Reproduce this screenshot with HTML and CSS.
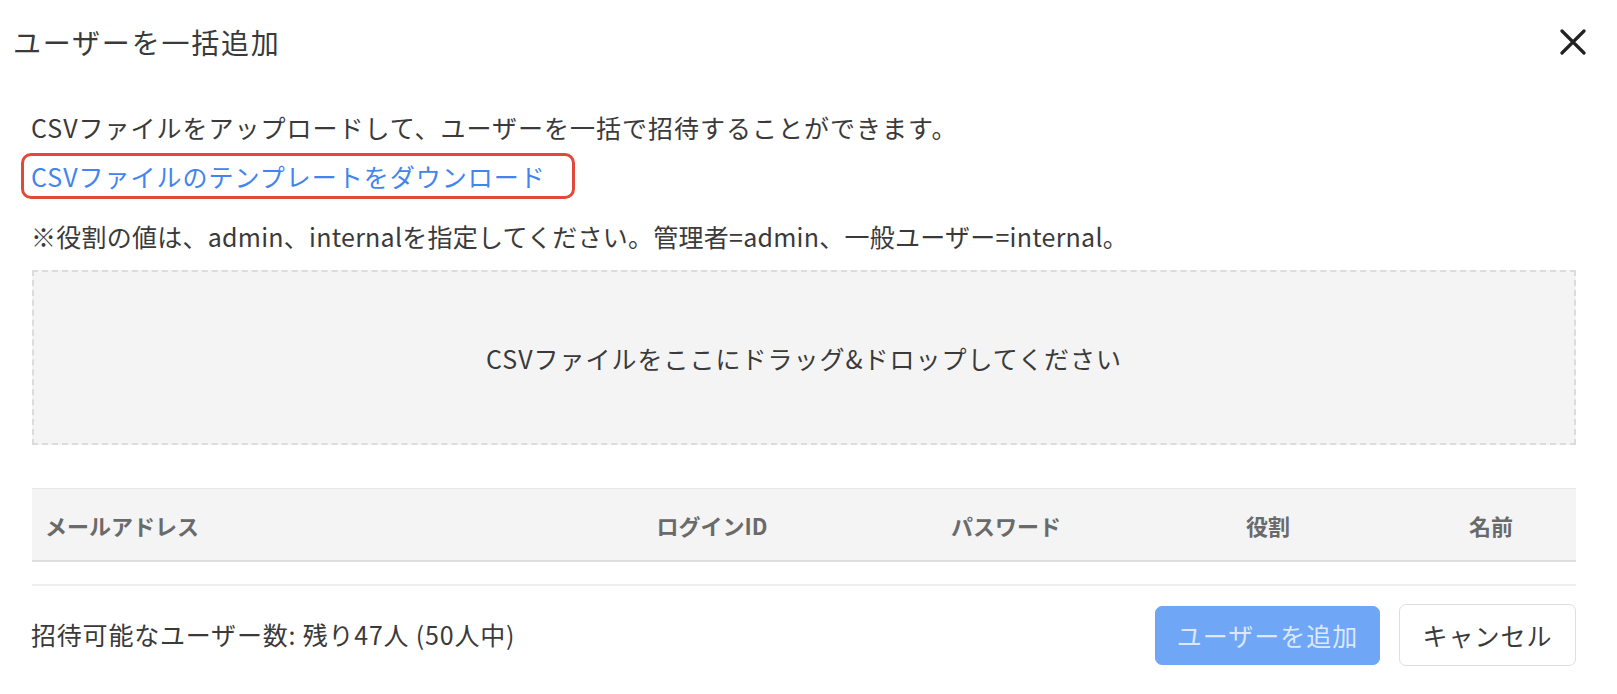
FILE: index.html
```html
<!DOCTYPE html>
<html lang="ja">
<head>
<meta charset="utf-8">
<title>ユーザーを一括追加</title>
<link rel="stylesheet" href="styles.css">
</head>
<body>
<div class="modal">
  <div class="modal-header">
    <h1 class="modal-title">ユーザーを一括追加</h1>
    <button class="close-btn" aria-label="閉じる">
      <svg width="26" height="26" viewBox="0 0 26 26"><path d="M2 2 L24 24 M24 2 L2 24" stroke="#222" stroke-width="3.2" stroke-linecap="round" fill="none"/></svg>
    </button>
  </div>
  <div class="modal-body">
    <p class="desc">CSVファイルをアップロードして、ユーザーを一括で招待することができます。</p>
    <div class="link-row"><a class="template-link" href="#">CSVファイルのテンプレートをダウンロード</a></div>
    <p class="note">※役割の値は、admin、internalを指定してください。管理者=admin、一般ユーザー=internal。</p>
    <div class="dropzone">CSVファイルをここにドラッグ&amp;ドロップしてください</div>
    <div class="table">
      <div class="thead">
        <div class="th th-left">メールアドレス</div>
        <div class="th">ログインID</div>
        <div class="th">パスワード</div>
        <div class="th">役割</div>
        <div class="th">名前</div>
      </div>
      <div class="tbody"></div>
    </div>
    <div class="footer">
      <span class="count">招待可能なユーザー数: 残り47人 (50人中)</span>
      <div class="actions">
        <button class="btn btn-primary" disabled>ユーザーを追加</button>
        <button class="btn btn-default">キャンセル</button>
      </div>
    </div>
  </div>
</div>
</body>
</html>
```

FILE: styles.css
```css
* { box-sizing: border-box; }
html, body { margin: 0; padding: 0; background: #fff; }
body {
  font-family: "Noto Sans CJK JP", "Noto Sans", sans-serif;
  color: #3a3a3a;
  font-size: 25px;
  letter-spacing: 1px;
}
.modal { width: 1617px; height: 694px; }
.modal-header {
  height: 84px;
  display: flex;
  align-items: center;
  justify-content: space-between;
  padding: 0 31px 0 13px;
}
.modal-title {
  margin: 0;
  font-size: 28px;
  font-weight: 400;
  letter-spacing: 1.8px;
  color: #3a3a3a;
  line-height: 36px;
}
.close-btn {
  border: 0;
  background: transparent;
  padding: 0;
  width: 26px;
  height: 26px;
  display: flex;
  cursor: pointer;
}
.modal-body { padding: 0 41px 0 31px; }
.desc {
  margin: 25px 0 0;
  line-height: 36px;
}
.link-row { margin-top: 8px; height: 46px; }
.template-link {
  display: inline-block;
  margin-left: -10px;
  padding: 0 26px 0 7px;
  height: 46px;
  line-height: 40px;
  border: 3px solid #e2493b;
  border-radius: 10px;
  color: #4384ee;
  text-decoration: none;
}
.note {
  margin: 19px 0 0;
  line-height: 36px;
  letter-spacing: 0.25px;
}
.dropzone {
  margin-top: 16px;
  margin-left: 1px;
  height: 175px;
  background: #f4f4f4;
  border: 2px dashed #dcdcdc;
  display: flex;
  align-items: center;
  justify-content: center;
  color: #3a3a3a;
}
.table { margin-top: 43px; margin-left: 1px; }
.thead {
  display: grid;
  grid-template-columns: 510px 340px 248px 276px 170px;
  height: 74px;
  background: #f4f4f4;
  border-top: 1px solid #e8e8e8;
  border-bottom: 2px solid #dedede;
  align-items: center;
}
.th {
  font-size: 22px;
  font-weight: 700;
  color: #6a6a6a;
  text-align: center;
  letter-spacing: 0;
}
.th-left { text-align: left; padding-left: 13px; }
.tbody {
  height: 24px;
  border-bottom: 2px solid #eeeeee;
}
.footer {
  margin-top: 18px;
  display: flex;
  justify-content: space-between;
  align-items: center;
}
.count { line-height: 36px; margin-top: -2px; letter-spacing: 0.8px; }
.actions { display: flex; gap: 19px; align-items: center; }
.btn {
  font-family: inherit;
  font-size: 25px;
  letter-spacing: 1px;
  height: 60px;
  border-radius: 7px;
  padding: 0;
  cursor: pointer;
}
.btn-primary {
  width: 225px;
  height: 59px;
  background: #6fa6f6;
  border: 1px solid #6fa6f6;
  color: #dbe8fd;
}
.btn-default {
  width: 177px;
  height: 62px;
  background: #fff;
  border: 1px solid #dedede;
  color: #3a3a3a;
}
```
